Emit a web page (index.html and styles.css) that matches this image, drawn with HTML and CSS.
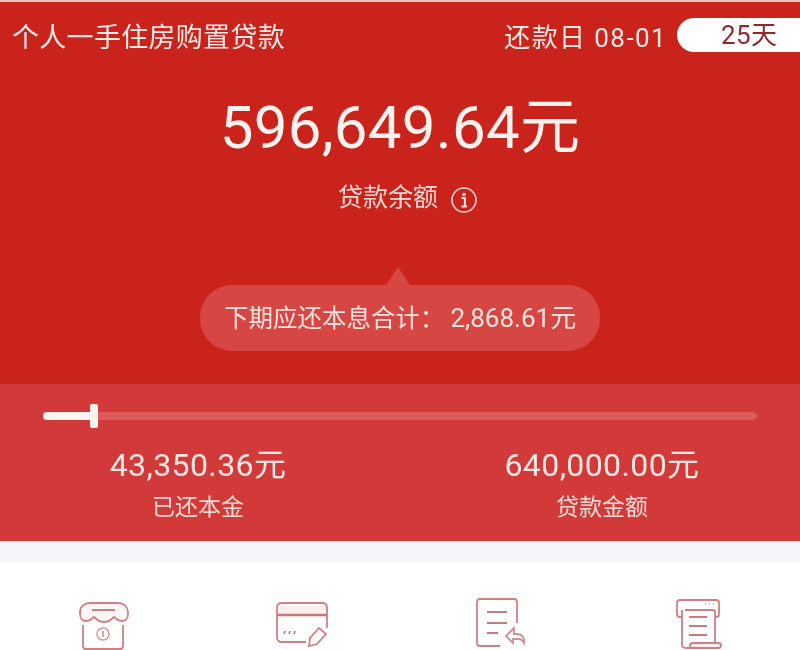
FILE: index.html
```html
<!DOCTYPE html>
<html lang="zh-CN">
<head>
  <meta charset="UTF-8" />
  <title>贷款详情</title>
  <link rel="stylesheet" href="styles.css">
</head>
<body>
  <section class="hero">
    <div class="top-row">
      <span class="loan-name">个人一手住房购置贷款</span>
      <span class="due-date">还款日 08-01</span>
      <span class="days-pill">25天</span>
    </div>
    <div class="balance">596,649.64元</div>
    <div class="balance-label">
      <span>贷款余额</span>
      <svg class="info-icon" viewBox="0 0 28 28" width="28" height="28">
        <circle cx="14" cy="14" r="12" fill="none" stroke="#f6d5d0" stroke-width="1.6"/>
        <circle cx="14" cy="8.5" r="1.7" fill="#f8e4e0"/>
        <path d="M11.5 12h3.400v8.200M11.500 20.400h5.600" fill="none" stroke="#f8e4e0" stroke-width="2"/>
      </svg>
    </div>
    <div class="bubble">下期应还本息合计：<span class="bubble-num">2,868.61元</span></div>
  </section>

  <section class="progress-panel">
    <div class="track">
      <div class="track-fill"></div>
      <div class="track-handle"></div>
    </div>
    <div class="stats">
      <div class="stat">
        <div class="stat-value">43,350.36元</div>
        <div class="stat-label">已还本金</div>
      </div>
      <div class="stat">
        <div class="stat-value">640,000.00元</div>
        <div class="stat-label">贷款金额</div>
      </div>
    </div>
  </section>

  <div class="strip"></div>

  <nav class="menu">
    <svg class="menu-icon" viewBox="0 0 60 60" width="60" height="60">
      <path d="M20 8h28c6 0 10 4 10 9v2c0 5-3 7-6 7s-5-1-8-4c-3 3-6 5-10 5s-7-2-10-5c-3 3-5 4-8 4s-6-2-6-7v-2c0-5 4-9 10-9z" fill="#fdf6f6" stroke="#d27f84" stroke-width="1.8"/>
      <path d="M22 15h23" stroke="#cc7077" stroke-width="1.8" fill="none"/>
      <path d="M13 30v21c0 2 1 3 3 3h34c2 0 3-1 3-3V30" stroke="#d27f84" stroke-width="1.8" fill="none"/>
      <circle cx="33" cy="39" r="6" stroke="#d69297" stroke-width="1.4" fill="none"/>
      <path d="M33 36v6" stroke="#d27f84" stroke-width="1.4"/>
    </svg>
    <svg class="menu-icon" viewBox="0 0 60 60" width="60" height="60">
      <path d="M36 47H11c-2 0-4-2-4-4V12c0-2 2-4 4-4h42c2 0 4 2 4 4v21" stroke="#d27f84" stroke-width="1.8" fill="none"/>
      <path d="M8 11h48v9H8z" fill="#fbeeee"/>
      <path d="M7 20h50" stroke="#cf7479" stroke-width="2.400"/>
      <path d="M14 39l1-3M19 39l1-3M24 39l1-3" stroke="#b9767c" stroke-width="1.6"/>
      <path d="M39 51l1-8 9-10 7 6-9 10z" stroke="#d27f84" stroke-width="1.8" fill="none"/>
    </svg>
    <svg class="menu-icon" viewBox="0 0 60 60" width="60" height="60">
      <path d="M47 28V7c0-2-1-3-3-3H10C8 4 7 5 7 7v41c0 2 1 3 3 3h20" stroke="#d27f84" stroke-width="1.8" fill="none"/>
      <path d="M17 17h20M17 28h20M17 38h11" stroke="#c97a80" stroke-width="1.8" fill="none"/>
      <path d="M44 33l-8 8 7 7v-4h5c3 0 5 1 6 4 1-5-2-9-7-9h-3z" stroke="#cf9095" stroke-width="1.8" fill="none"/>
    </svg>
    <svg class="menu-icon" viewBox="0 0 60 60" width="60" height="60">
      <path d="M12 22H10c-2 0-3-1-3-3V8c0-2 1-3 3-3h36c2 0 3 1 3 3v11c0 2-1 3-3 3" stroke="#d27f84" stroke-width="1.8" fill="none"/>
      <path d="M35 9h1M39 9h1M43 9h1" stroke="#d69297" stroke-width="1.6"/>
      <path d="M15 15h28c1 0 2 1 2 2v31M12 15v35c0 2 2 3 5 3h6" stroke="#d27f84" stroke-width="1.8" fill="#fff"/>
      <path d="M19 22h18M19 31h18M19 40h18" stroke="#c97a80" stroke-width="1.8" fill="none"/>
      <path d="M23 48h25c2 0 3 1 3 2.500s-1 2.500-3 2.500H23c-2 0-3-1-3-2.500s1-2.500 3-2.500z" fill="#fbeeee" stroke="#d27f84" stroke-width="1.8"/>
    </svg>
  </nav>
</body>
</html>
```

FILE: styles.css
```css
html, body {
  height: 100%;
}
body {
  margin: 0;
  height: 650px;
  overflow: hidden;
  background: #fff;
  font-family: Roboto, "Noto Sans CJK SC", sans-serif;
  color: #fbe9e6;
  filter: blur(0.5px);
}
.hero {
  height: 382px;
  border-top: 2px solid #eec4bf;
  background: #c9231b;
  display: flex;
  flex-direction: column;
  align-items: center;
}
.top-row {
  width: 100%;
  box-sizing: border-box;
  margin-top: 16px;
  padding-left: 12px;
  height: 34px;
  display: flex;
  align-items: center;
}
.loan-name {
  font-size: 27px;
  letter-spacing: 0.3px;
  flex: 1;
}
.due-date {
  font-size: 26px;
  letter-spacing: 1.4px;
  margin-right: 10px;
}
.days-pill {
  width: 123px;
  height: 34px;
  line-height: 35px;
  box-sizing: border-box;
  padding-left: 44px;
  background: #fff;
  border-radius: 17px 0 0 17px;
  color: #8a2a2c;
  font-size: 26px;
  letter-spacing: 0.4px;
}
.balance {
  margin-top: 41px;
  font-size: 60px;
  line-height: 70px;
  letter-spacing: 0.3px;
  color: #fdf1ee;
}
.balance-label {
  margin-top: 17px;
  margin-left: 16px;
  display: flex;
  align-items: center;
  gap: 12px;
  font-size: 25px;
  line-height: 36px;
  color: #f8dcd7;
}
.info-icon {
  display: block;
  margin-top: 4px;
}
.bubble {
  position: relative;
  margin-top: 69px;
  width: 400px;
  height: 66px;
  box-sizing: border-box;
  padding-left: 24px;
  line-height: 66px;
  white-space: nowrap;
  border-radius: 32px;
  background: #d64643;
  font-size: 24.5px;
  color: #fbe3df;
}
.bubble::before {
  content: "";
  position: absolute;
  left: 186px;
  top: -18px;
  border-left: 12px solid transparent;
  border-right: 12px solid transparent;
  border-bottom: 18px solid #d64643;
}
.bubble-num {
  font-size: 26px;
  margin-left: 6px;
}
.progress-panel {
  height: 157px;
  background: #d13a38;
  padding-top: 28px;
  box-sizing: border-box;
}
.track {
  position: relative;
  margin: 0 43px;
  height: 8px;
  border-radius: 4px;
  background: #dc5a57;
}
.track-fill {
  width: 50px;
  height: 8px;
  border-radius: 4px 0 0 4px;
  background: #fdf3f1;
}
.track-handle {
  position: absolute;
  left: 47px;
  top: -8px;
  width: 8px;
  height: 24px;
  border-radius: 2px;
  background: #fdf3f1;
}
.stats {
  display: flex;
  margin-top: 23px;
  padding-left: 98px;
}
.stat {
  width: 200px;
  text-align: center;
  white-space: nowrap;
}
.stat + .stat {
  margin-left: 204px;
}
.stat-value {
  font-size: 32px;
  line-height: 44px;
  letter-spacing: 0.4px;
  color: #fbe6e3;
}
.stat-label {
  margin-top: 5px;
  font-size: 23px;
  line-height: 32px;
  color: #f9dcd8;
}
.strip {
  height: 21px;
  background: #f3f5f8;
}
.menu {
  display: grid;
  grid-template-columns: repeat(4, 200px);
  padding-top: 33px;
}
.menu-icon {
  display: block;
  margin: 0 auto;
}
```
